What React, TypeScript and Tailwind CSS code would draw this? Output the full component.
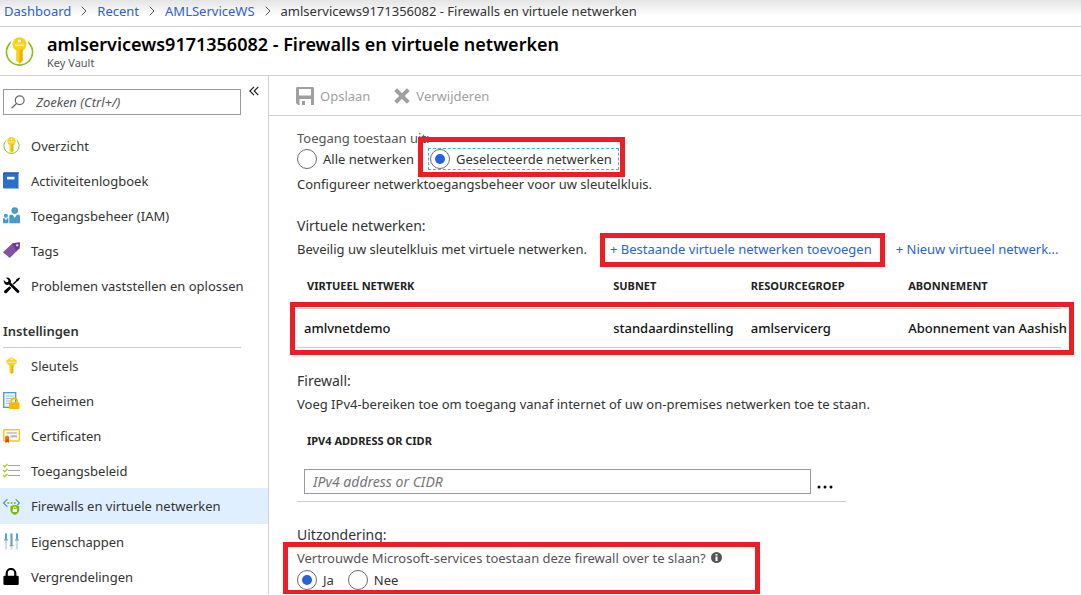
import type { ReactNode } from "react";

function VaultIcon({ className }: { className: string }) {
  return (
    <svg viewBox="0 0 28 28" className={className} aria-hidden="true">
      <circle cx="14" cy="14.5" r="12.6" fill="none" stroke="#8bbf1f" strokeWidth="1.6" />
      <circle cx="14" cy="7" r="8.6" fill="#fff" />
      <circle cx="14" cy="7" r="6.8" fill="#fcd116" />
      <path d="M10.8 12h6.4v10.8L14 25.8l-3.2-3V12z" fill="#fcd116" />
      <path d="M14 12h3.2v2.6l-1 1 1 1.1v1.5l-1 1 1 1v2.6L14 25.8z" fill="#e8b50a" />
      <path d="M9.5 7.2h9v1.6h-9z" fill="#fff3a8" />
      <circle cx="14" cy="3.8" r="1.5" fill="#fff" />
    </svg>
  );
}

function BookIcon() {
  return (
    <svg viewBox="0 0 17 17" className="size-[17px]" aria-hidden="true">
      <path d="M1.5 0.5H16v16H1.500C.6 16.500 0 16 0 15V2C0 1 .6.5 1.500.5z" fill="#2a6fc9" />
      <path d="M0 2C0 1 .6.5 1.500.5H16v1H2v.8H0z" fill="#1b4f9c" />
      <path d="M15 1.500h1v15h-1z" fill="#8db8ee" />
      <path d="M4 4.800h7.500v2.600H4z" fill="#fff" />
    </svg>
  );
}

function PeopleIcon() {
  return (
    <svg viewBox="0 0 17 17" className="size-[17px]" aria-hidden="true" fill="#4a9acb">
      <circle cx="11.700" cy="3.600" r="3.300" />
      <path d="M6.300 16.300V9.500c0-1 .7-1.700 1.700-1.700h1.600l2.100 3.200 2.100-3.200h1.500c1 0 1.700.7 1.700 1.700v6.800z" />
      <circle cx="2.900" cy="8.800" r="2" />
      <path d="M0 16.300v-4c0-.6.400-1 1-1h.7l1.200 1.900 1.200-1.900h1.300v5z" />
    </svg>
  );
}

function TagIcon() {
  return (
    <svg viewBox="0 0 17 17" className="size-[17px]" aria-hidden="true">
      <path d="M9.500 1.300 16 .5c.6 0 1 .4 1 1l-.6 4.700L6.800 16 0 10.200z" fill="#8250a4" />
      <path d="M9.500 1.300 16 .5c.6 0 1 .4 1 1l-.6 4.700-3.300 3.400z" fill="#6c3a91" />
      <circle cx="14.200" cy="3.200" r="1.200" fill="#d9c5e8" />
    </svg>
  );
}

function ToolsIcon() {
  return (
    <svg viewBox="0 0 17 17" className="size-[17px]" aria-hidden="true">
      <path d="M3 .8a3.900 3.900 0 0 1 4.800 4.900l8.200 7.800c.6.600.6 1.500 0 2.100s-1.500.6-2.100 0L6 7.600A3.900 3.900 0 0 1 .8 3l2.400 2.300 1.900-.4.300-1.800z" />
      <path d="M16.300.5 17 1.200 15.200 4l-1.300.5-3.200 3.300-1-1L13 3.500l.4-1.300zM6.600 9.300l1.700 1.600-4.400 4.800c-.7.700-1.700.8-2.400.1s-.6-1.600.1-2.300z" />
    </svg>
  );
}

function KeyIcon() {
  return (
    <svg viewBox="0 0 17 17" className="size-[17px]" aria-hidden="true">
      <path d="M8.500 0 13.700 3.500V6L10.500 8.500v2l-.8.700.8.800v1l-.8.800.8.800v.7L8.500 17l-2-1.600V8.500L3.300 6V3.500z" fill="#fcd116" />
      <path d="M8.500 8.500h2v2l-.8.700.8.800v1l-.8.800.8.800v.7L8.500 17z" fill="#e3b008" />
      <path d="M4.500 4.800h8v.9h-8z" fill="#fff6bd" />
      <circle cx="8.500" cy="2.200" r="1" fill="#fff" />
    </svg>
  );
}

function SecretIcon() {
  return (
    <svg viewBox="0 0 17 17" className="size-[17px]" aria-hidden="true">
      <path d="M.7.700h12v14.600H.7z" fill="#e8f3fb" stroke="#4d9bcd" strokeWidth="1.300" />
      <path d="M3 4h7.500M3 6.500h7M3 9h4M3 11.500h3" stroke="#9cc8e6" />
      <path d="M8.300 10.500V9.200a2.900 2.900 0 0 1 5.800 0v1.300" fill="none" stroke="#f9b900" strokeWidth="1.700" />
      <rect x="6" y="10.200" width="10.500" height="6.800" rx="1" fill="#f9b900" />
    </svg>
  );
}

function CertificateIcon() {
  return (
    <svg viewBox="0 0 17 17" className="size-[17px]" aria-hidden="true">
      <rect x=".7" y="2.700" width="15.600" height="11.300" rx=".8" fill="#fff" stroke="#f6c915" strokeWidth="1.400" />
      <path d="M3.500 6h10.500" stroke="#9a9a9a" />
      <path d="M7.500 9.300h6.500" stroke="#b7b7b7" strokeWidth="2.200" />
      <path d="M2.300 11h3.600v5L4.100 15l-1.800 1z" fill="#c9500b" />
      <circle cx="4.100" cy="10.500" r="2.100" fill="#f0720e" />
    </svg>
  );
}

function PolicyIcon() {
  return (
    <svg viewBox="0 0 17 17" className="size-[17px]" aria-hidden="true" fill="none">
      <path d="M5 3.500h12M5 8.500h12M5 13.500h12" stroke="#a5a5a5" strokeWidth="1.200" />
      <path d="m.3 3.300 1.400 1.400L4.600 2M.3 8.300l1.400 1.400L4.600 7M.3 13.300l1.400 1.400L4.600 12" stroke="#a4cf2e" strokeWidth="1.400" />
    </svg>
  );
}

function FirewallIcon() {
  return (
    <svg viewBox="0 0 17 17" className="size-[17px]" aria-hidden="true">
      <path d="M4.400 1.200.6 5l3.800 3.800M12.600 1.200 16.400 5l-2.300 2.300" fill="none" stroke="#4a93cc" strokeWidth="1.200" />
      <g fill="#7fba00">
        <circle cx="5.200" cy="5" r="1" />
        <circle cx="8.500" cy="5" r="1" />
        <circle cx="11.800" cy="5" r="1" />
        <path d="m11.800 6.700 4.400 1.500v4c0 2.300-2.300 3.900-4.400 4.800-2.100-.9-4.400-2.500-4.400-4.800v-4z" />
      </g>
      <rect x="9.700" y="11" width="4.200" height="3" fill="#fff" />
      <path d="M10.500 11v-.8a1.300 1.300 0 0 1 2.600 0v.8" fill="none" stroke="#fff" strokeWidth=".8" />
    </svg>
  );
}

function SlidersIcon() {
  return (
    <svg viewBox="0 0 17 17" className="size-[17px]" aria-hidden="true">
      <path d="M2 .5h2v16H2zM7.500.5h2v16h-2zM13 .5h2v16h-2z" fill="#c3dff0" />
      <path d="M2 .5h2v6H2zM7.500.5h2v12h-2zM13 .5h2v6h-2z" fill="#58a5d3" />
      <path d="M1 6.200h4v1.300H1zM6.500 12h4v1.300h-4zM12 6.200h4v1.300h-4z" fill="#9a9a9a" />
    </svg>
  );
}

function LockIcon() {
  return (
    <svg viewBox="0 0 17 17" className="size-[17px]" aria-hidden="true">
      <path d="M3.700 8.500V5.300a4.300 4.300 0 0 1 8.600 0v3.200" fill="none" stroke="#000" strokeWidth="2.200" />
      <rect x=".4" y="7.700" width="15.300" height="9.300" rx="1.300" />
    </svg>
  );
}

type NavEntry = { label: string; icon: ReactNode; active?: boolean };

const generalItems: NavEntry[] = [
  { label: "Overzicht", icon: <VaultIcon className="size-[17px]" /> },
  { label: "Activiteitenlogboek", icon: <BookIcon /> },
  { label: "Toegangsbeheer (IAM)", icon: <PeopleIcon /> },
  { label: "Tags", icon: <TagIcon /> },
  { label: "Problemen vaststellen en oplossen", icon: <ToolsIcon /> },
];

const settingsItems: NavEntry[] = [
  { label: "Sleutels", icon: <KeyIcon /> },
  { label: "Geheimen", icon: <SecretIcon /> },
  { label: "Certificaten", icon: <CertificateIcon /> },
  { label: "Toegangsbeleid", icon: <PolicyIcon /> },
  { label: "Firewalls en virtuele netwerken", icon: <FirewallIcon />, active: true },
  { label: "Eigenschappen", icon: <SlidersIcon /> },
  { label: "Vergrendelingen", icon: <LockIcon /> },
];

function NavList({ items }: { items: NavEntry[] }) {
  return (
    <ul>
      {items.map((item) => (
        <li key={item.label}>
          <a
            href="#"
            aria-current={item.active ? "page" : undefined}
            className={
              item.active
                ? "flex h-9 items-center gap-[11px] bg-[#e0efff] pl-[3px]"
                : "flex h-[35px] items-center gap-[11px] pl-[3px]"
            }
          >
            {item.icon}
            <span className="whitespace-nowrap">{item.label}</span>
          </a>
        </li>
      ))}
    </ul>
  );
}

function Radio({ name, label, checked }: { name: string; label: string; checked?: boolean }) {
  return (
    <label className="flex items-center gap-[6px] whitespace-nowrap">
      <input
        type="radio"
        name={name}
        defaultChecked={checked}
        className="grid size-5 shrink-0 appearance-none place-content-center rounded-full border border-[#6b6b6b] bg-white before:size-[10px] before:rounded-full checked:before:bg-[#2560e0]"
      />
      {label}
    </label>
  );
}

function Chevron() {
  return (
    <svg viewBox="0 0 6 10" className="h-[10px] w-[6px]" fill="none" stroke="#555" aria-hidden="true">
      <path d="m.7.700 4.300 4.300L.7 9.300" />
    </svg>
  );
}

function Highlight({ className }: { className: string }) {
  return <div aria-hidden="true" className={`pointer-events-none absolute border-[5px] border-[#ee1c25] ${className}`} />;
}

export default function App() {
  return (
    <div className="bg-white font-['Noto_Sans','Open_Sans',sans-serif] text-[13px] leading-5 text-[#333]">
      <nav
        aria-label="Breadcrumb"
        className="flex h-[27px] items-center gap-[10px] border-b border-[#d0d0d0] bg-linear-to-b from-[#e4e4e4] to-white to-60% pb-1 pl-1 whitespace-nowrap"
      >
        <a href="#" className="text-[#2d5fd7]">Dashboard</a>
        <Chevron />
        <a href="#" className="text-[#2d5fd7]">Recent</a>
        <Chevron />
        <a href="#" className="text-[#2d5fd7]">AMLServiceWS</a>
        <Chevron />
        <span>amlservicews9171356082 - Firewalls en virtuele netwerken</span>
      </nav>

      <header className="flex h-[49px] gap-[13px] border-b border-[#d0d0d0] pl-[5px]">
        <VaultIcon className="mt-[10px] size-[29px]" />
        <div className="pt-[5px]">
          <h1 className="text-[18px] leading-6 font-semibold whitespace-nowrap text-black">
            amlservicews9171356082 - Firewalls en virtuele netwerken
          </h1>
          <p className="text-[11px] leading-[14px] text-[#555]">Key Vault</p>
        </div>
      </header>

      <div className="flex">
        <aside className="w-[269px] shrink-0 border-r border-[#d0d0d0]">
          <div className="flex items-start gap-2 pt-[13px] pl-[3px]">
            <label className="flex h-[26px] w-[238px] items-center gap-[11px] border border-[#999] px-[7px]">
              <svg viewBox="0 0 14 14" className="size-[14px] shrink-0" fill="none" stroke="#666" strokeWidth="1.200" aria-hidden="true">
                <circle cx="8.700" cy="5.300" r="4.400" />
                <path d="M5.500 8.500.6 13.300" />
              </svg>
              <input
                type="text"
                aria-label="Zoeken"
                placeholder="Zoeken (Ctrl+/)"
                className="min-w-0 flex-1 outline-none placeholder:text-[#555] placeholder:italic"
              />
            </label>
            <button type="button" aria-label="Menu samenvouwen" className="-mt-[3px]">
              <svg viewBox="0 0 10 10" className="size-[10px]" fill="none" stroke="#222" strokeWidth="1.200" aria-hidden="true">
                <path d="M5 .8.900 5 5 9.200M9.300.8 5.200 5l4.100 4.200" />
              </svg>
            </button>
          </div>
          <div className="pt-[13px]">
            <NavList items={generalItems} />
          </div>
          <h2 className="mt-[18px] mr-[27px] ml-[3px] border-b border-[#ccc] pb-[6px] font-semibold">Instellingen</h2>
          <NavList items={settingsItems} />
        </aside>

        <main className="min-w-0 flex-1">
          <div className="flex h-10 items-center gap-6 border-b border-[#d0d0d0] pl-[27px] text-[#a0a0a0]">
            <button type="button" className="flex items-center gap-[6px]">
              <svg viewBox="0 0 18 18" className="size-[18px]" aria-hidden="true">
                <path d="M0 1.500C0 .6.600 0 1.500 0h15c.9 0 1.500.6 1.500 1.500V18h-3v-6H3.500v6H2L0 16zM3 2v6.500h12V2z" fill="#a0a0a0" fillRule="evenodd" />
                <path d="M6 14h3v4H6z" fill="#a0a0a0" />
              </svg>
              Opslaan
            </button>
            <button type="button" className="flex items-center gap-[6px]">
              <svg viewBox="0 0 16 16" className="size-4" stroke="#a0a0a0" strokeWidth="4" aria-hidden="true">
                <path d="m1.700 1.700 12.600 12.600M14.300 1.700 1.700 14.300" />
              </svg>
              Verwijderen
            </button>
          </div>

          <div className="pt-3 pr-5 pl-7">
            <fieldset>
              <legend className="text-[#555]">Toegang toestaan uit:</legend>
              <div className="mt-[1px] flex gap-4">
                <Radio name="access" label="Alle netwerken" />
                <div className="relative">
                  <Radio name="access" label="Geselecteerde netwerken" checked />
                  <div aria-hidden="true" className="pointer-events-none absolute -inset-y-[1px] -right-[7px] -left-[2px] border border-dashed border-[#35b5ee]" />
                  <Highlight className="-top-3 -right-[13px] -bottom-2 -left-3" />
                </div>
              </div>
            </fieldset>
            <p className="mt-[5px]">Configureer netwerktoegangsbeheer voor uw sleutelkluis.</p>

            <section className="mt-[22px]">
              <h3 className="text-[14px]">Virtuele netwerken:</h3>
              <div className="mt-[3px] flex whitespace-nowrap">
                <p>Beveilig uw sleutelkluis met virtuele netwerken.</p>
                <div className="relative ml-[23px]">
                  <a href="#" className="text-[#2d5fd7]">+ Bestaande virtuele netwerken toevoegen</a>
                  <Highlight className="-top-[6px] -right-[13px] -bottom-2 -left-[10px]" />
                </div>
                <a href="#" className="ml-6 text-[#2d5fd7]">+ Nieuw virtueel netwerk...</a>
              </div>

              <div className="relative mt-[5px]">
                <table className="w-full table-fixed border-collapse text-left whitespace-nowrap">
                  <colgroup>
                    <col className="w-[41%]" />
                    <col className="w-[18%]" />
                    <col className="w-[21%]" />
                    <col className="w-[20%]" />
                  </colgroup>
                  <thead>
                    <tr className="h-11 border-b border-[#ccc] text-[11px] text-[#222]">
                      <th className="pl-[10px] font-bold">VIRTUEEL NETWERK</th>
                      <th className="pl-[3px] font-bold">SUBNET</th>
                      <th className="pl-[3px] font-bold">RESOURCEGROEP</th>
                      <th className="font-bold">ABONNEMENT</th>
                    </tr>
                  </thead>
                  <tbody>
                    <tr className="h-[39px] border-b border-[#ccc] font-medium text-[#111]">
                      <td className="pl-[7px]">amlvnetdemo</td>
                      <td className="pl-[3px]">standaardinstelling</td>
                      <td className="pl-[3px]">amlservicerg</td>
                      <td>Abonnement van Aashish</td>
                    </tr>
                  </tbody>
                </table>
                <Highlight className="top-[38px] -right-[13px] -bottom-[7px] -left-[7px]" />
              </div>
            </section>

            <section className="mt-[23px]">
              <h3 className="text-[14px]">Firewall:</h3>
              <p className="mt-[3px]">Voeg IPv4-bereiken toe om toegang vanaf internet of uw on-premises netwerken toe te staan.</p>
              <div className="max-w-[549px] border-b border-[#ccc] pt-[17px] pb-[7px] pl-[7px]">
                <label htmlFor="cidr" className="block pl-[3px] text-[11px] leading-5 font-bold text-[#222]">IPV4 ADDRESS OR CIDR</label>
                <div className="mt-[18px] flex gap-[6px]">
                  <input
                    id="cidr"
                    type="text"
                    placeholder="IPv4 address or CIDR"
                    className="h-[25px] min-w-0 flex-1 border border-[#999] px-2 text-[14px] outline-none placeholder:text-[#777] placeholder:italic"
                  />
                  <button type="button" aria-label="Meer opties" className="flex w-[29px] items-end pb-[5px]">
                    <svg viewBox="0 0 16 4" className="h-1 w-4" aria-hidden="true">
                      <circle cx="2" cy="2" r="1.500" />
                      <circle cx="8" cy="2" r="1.500" />
                      <circle cx="14" cy="2" r="1.500" />
                    </svg>
                  </button>
                </div>
              </div>
            </section>

            <section className="mt-[23px]">
              <h3 className="text-[14px]">Uitzondering:</h3>
              <div className="relative mt-[3px] w-fit">
                <fieldset>
                  <legend className="flex items-center gap-[5px] text-[#555]">
                    Vertrouwde Microsoft-services toestaan deze firewall over te slaan?
                    <svg viewBox="0 0 11 11" className="size-[11px]" aria-hidden="true">
                      <circle cx="5.500" cy="5.500" r="5.500" fill="#555" />
                      <path d="M4.500 4.500h2V9h-2zM4.500 2h2v1.600h-2z" fill="#fff" />
                    </svg>
                  </legend>
                  <div className="mt-[2px] flex gap-[14px]">
                    <Radio name="bypass" label="Ja" checked />
                    <Radio name="bypass" label="Nee" />
                  </div>
                </fieldset>
                <Highlight className="-top-[6px] -right-[38px] -bottom-[5px] -left-[14px]" />
              </div>
            </section>
          </div>
        </main>
      </div>
    </div>
  );
}
